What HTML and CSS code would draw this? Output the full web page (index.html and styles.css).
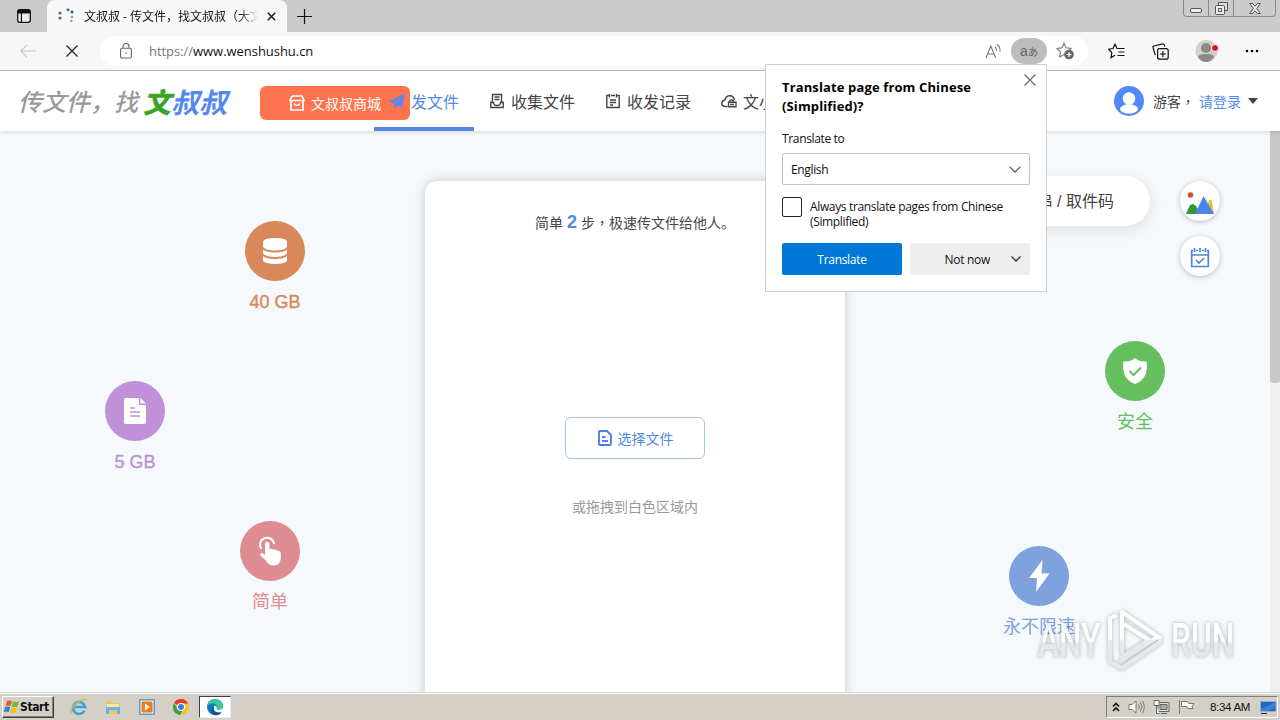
FILE: index.html
```html
<!DOCTYPE html>
<html lang="zh-CN">
<head>
    <meta charset="UTF-8">
    <meta name="viewport" content="width=device-width, initial-scale=1.0">
    <title>文叔叔 - 传文件，找文叔叔</title>
    <link rel="stylesheet" href="styles.css">
</head>
<body>
    <div class="screen">
        <!-- Browser tabs -->
        <div class="tabbar">
            <svg class="tab-actions" width="16" height="16" viewBox="0 0 16 16"><rect x="1.7" y="1.7" width="12.6" height="12.6" rx="2" fill="#eee" stroke="#111" stroke-width="1.3"/><path d="M2 2h12v3.4H6V14H4.800V5.400H2z" fill="#111"/></svg>
            <div class="tab">
                <svg class="favicon" width="16" height="16" viewBox="0 0 16 16" fill="#2879b9"><circle cx="2" cy="5" r="1.6"/><circle cx="2" cy="10" r="1.6"/><circle cx="10" cy="1.8" r="1.5"/><circle cx="14" cy="4" r="1.5" fill="#175d91"/><circle cx="14" cy="9" r="1.3" fill="#70a8d0"/><circle cx="13.3" cy="13" r="1.2" fill="#70a8d0"/></svg>
                <span class="tab-title">文叔叔 - 传文件，找文叔叔（大文</span>
                <svg width="9" height="9" viewBox="0 0 9 9"><path d="M.8.8l7.4 7.4M8.2.8L.8 8.2" stroke="#111" stroke-width="1.4"/></svg>
            </div>
            <svg class="new-tab" width="15" height="15" viewBox="0 0 15 15"><path d="M7.5 0v15M0 7.5h15" stroke="#111" stroke-width="1.2"/></svg>
            <div class="window-buttons">
                <span class="min"><svg width="12" height="5" viewBox="0 0 12 5"><rect x=".5" y=".5" width="11" height="4" rx="1.5" fill="#eee" stroke="#555"/></svg></span>
                <span class="max"><svg width="13" height="13" viewBox="0 0 13 13" fill="none" stroke="#555"><path d="M3.5 3.5v-3h9v8h-3" fill="#ddd"/><rect x=".5" y="3.5" width="9" height="9" rx="1" fill="#eee"/><rect x="3.5" y="6.5" width="3" height="3"/></svg></span>
                <span class="close"><svg width="12" height="11" viewBox="0 0 12 11"><path d="M.7.5h3L6 3.3 8.3.5h3L7.7 5.5l3.6 5h-3L6 7.7l-2.3 2.8h-3l3.6-5z" fill="#eee" stroke="#555"/></svg></span>
            </div>
        </div>

        <!-- Address bar -->
        <div class="toolbar">
            <svg class="back" width="16" height="14" viewBox="0 0 16 14" fill="none" stroke="#c9c9c9" stroke-width="1.2"><path d="M16 7H1M7 .8L.9 7 7 13.200"/></svg>
            <svg class="stop" width="12" height="12" viewBox="0 0 12 12"><path d="M.5.5l11 11M11.500.5l-11 11" stroke="#222" stroke-width="1.2"/></svg>
            <div class="address">
                <svg class="lock" width="12" height="16" viewBox="0 0 12 16" fill="none" stroke="#666" stroke-width="1.1"><rect x=".6" y="5.200" width="10.800" height="9.800" rx="1.500"/><path d="M3 5V3.500a3 3 0 0 1 6 0V5"/><circle cx="6" cy="10" r=".8" fill="#666" stroke="none"/></svg>
                <span class="url"><span>https://</span>www.wenshushu.cn</span>
                <svg class="read" width="17" height="16" viewBox="0 0 17 16" fill="none" stroke="#777" stroke-width="1.1"><path d="M1 15L5.800 3l4.800 12M2.600 11H9M10 3.800q1.800 1.400 1.500 4M12 1.500q3.500 2.500 3 7"/></svg>
                <span class="translate-badge"><span>a</span>あ</span>
                <svg class="star" width="19" height="18" viewBox="0 0 19 18"><path d="M8 1.200l2.200 4.500 4.900.7-3.400 3.500.6 4.800L8 12.600l-4.400 2.300.9-5L1 6.400l4.900-.7z" fill="none" stroke="#777" stroke-width="1.100"/><circle cx="13" cy="12.500" r="4.800" fill="#666"/><path d="M13 10v5M10.500 12.500h5" stroke="#fff" stroke-width="1.200"/></svg>
            </div>
            <svg class="favorites" width="17" height="16" viewBox="0 0 17 16" fill="none" stroke="#111" stroke-width="1.2"><path d="M9.500 5.500H9L7 1.200 5 5.500l-4.400.700 3.200 3.300L3 14.500 7 12.200M9.500 5.500H16.500M10.500 9H16.500M9.500 12.500h7"/></svg>
            <svg class="collections" width="17" height="17" viewBox="0 0 17 17" fill="none" stroke="#111" stroke-width="1.2"><rect x="5.600" y="5.600" width="10.600" height="10.600" rx="2"/><path d="M10.900 8v6M8 11h6M13 3.500L12 1.500Q11.500.6 10.500.9L2 3Q.6 3.400 1 4.600L3.300 12"/></svg>
            <svg class="profile" width="24" height="24" viewBox="0 0 24 24"><circle cx="11.500" cy="12" r="11" fill="#d2d0ce"/><circle cx="11" cy="9" r="5" fill="#8c8a88"/><path d="M3 18q0-3 8-3t8 3q-3 5-8 5t-8-5z" fill="#8c8a88"/><circle cx="20" cy="9" r="3.500" fill="#e0101b" stroke="#f7f7f7"/></svg>
            <svg class="more" width="14" height="4" viewBox="0 0 14 4"><circle cx="2" cy="2" r="1.300"/><circle cx="7" cy="2" r="1.300"/><circle cx="12" cy="2" r="1.300"/></svg>
        </div>

        <!-- Site header -->
        <header class="site-header">
            <div class="logo"><span class="slogan">传文件，找</span><span class="brand"><b>文</b>叔叔</span></div>
            <a class="shop">
                <svg width="16" height="16" viewBox="0 0 16 16" fill="none" stroke="#fff" stroke-width="1.700"><path d="M2 6.500V15h12V6.500M3 1h10l2 4.500q-1 1.500-2.500 0M3 1L1 5.500q1 1.500 2.800 0h8.400M5 8.500q3 4 6 0"/></svg>
                <span>文叔叔商城</span>
            </a>
            <nav class="nav">
                <a class="nav-item active"><svg width="16" height="16" viewBox="0 0 16 16"><path d="M16 0L0 8.500l4.500 2zM16 0L5.500 11v4.500l2.800-3 4.700 2z" fill="#5488f0"/></svg>发文件</a>
                <a class="nav-item"><svg width="14" height="16" viewBox="0 0 14 16" fill="none" stroke="#444" stroke-width="1.400"><path d="M2.500 9V1.500h9V9M4.500 4h5M4.500 6.500h5M.8 8.500V14.500h12.400V8.500M.8 9.500H3.500q0 3 3.500 3t3.500-3h2.700"/></svg>收集文件</a>
                <a class="nav-item"><svg width="14" height="16" viewBox="0 0 14 16" fill="none" stroke="#444" stroke-width="1.400"><path d="M3 2.500H.8v12h12.400v-12H11M5 2.500h4M3.500 1v3.500M10.500 1v3.500M4 7h6M4 9.500h6M4 12h3"/></svg>收发记录</a>
                <a class="nav-item"><svg width="16" height="16" viewBox="0 0 16 16" fill="none" stroke="#444" stroke-width="1.400"><path d="M6.500 13.500H3.800Q.7 13 .8 10.200T4 7q.5-4 4.500-4.300T13.500 7M8.500 9v-1q2-2.500 4 0v1M7.500 9.200h7.500v4.500H7.500zM9 11.500h4"/></svg>文小二</a>
            </nav>
            <div class="account">
                <svg width="30" height="30" viewBox="0 0 30 30"><circle cx="15" cy="15" r="15" fill="#5488f5"/><circle cx="15" cy="12.500" r="6.300" fill="#fff"/><ellipse cx="15" cy="23" rx="9" ry="4.700" fill="#fff"/></svg>
                <span class="guest">游客<i class="comma" lang="zh-TW">，</i></span>
                <a class="login">请登录</a>
                <i class="caret"></i>
            </div>
        </header>

        <!-- Upload area with the floating features -->
        <main class="canvas">
            <section class="upload">
                <p class="steps">简单 <b>2</b> 步<i class="comma" lang="zh-TW">，</i>极速传文件给他人。</p>
                <button class="choose"><svg width="16" height="16" viewBox="0 0 16 16" fill="none" stroke="#4f82e6" stroke-width="1.900"><path d="M3 1h7l4 4v9q0 1-1 1H3q-1 0-1-1V2q0-1 1-1zM5 7h3.500M5 11h6"/></svg>选择文件</button>
                <p class="drop-hint">或拖拽到白色区域内</p>
            </section>

            <div class="feature storage">
                <span class="disc"><svg width="26" height="28" viewBox="0 0 26 28" fill="#fff"><path d="M1 5q0-4 12-4t12 4v5q-3 3.500-12 3.500T1 10z"/><path d="M1 12.500q3 3 12 3t12-3v4q-3 3.500-12 3.500T1 16.500z"/><path d="M1 19q3 3 12 3t12-3v5q-3 3-12 3T1 24z"/></svg></span>
                <span>40 GB</span>
            </div>
            <div class="feature size">
                <span class="disc"><svg width="24" height="28" viewBox="0 0 24 28"><path d="M3 1h13v7h7v17q0 2-2 2H3q-2 0-2-2V3q0-2 2-2z" fill="#fff"/><path d="M17.500 1l5.500 5.500h-5.500z" fill="#fff"/><path d="M7 15h10M7 19h10M7 11h5" stroke="#c091d9" stroke-width="1.600"/></svg></span>
                <span>5 GB</span>
            </div>
            <div class="feature easy">
                <span class="disc"><svg width="26" height="32" viewBox="0 0 26 32"><path d="M4.500 14A7 7 0 1 1 17 9" fill="none" stroke="#fff" stroke-width="2"/><path d="M8 9q0-2.300 2.200-2.300T12.500 9v5q2-1 4 .8 2-1 3.800 1 3.500-.8 3.500 3V24q-1 6.500-7 6.500-5 0-7.500-4.500L3 20q0-2 2-2l3 2z" fill="#fff"/></svg></span>
                <span>简单</span>
            </div>
            <div class="feature safe">
                <span class="disc"><svg width="26" height="28" viewBox="0 0 26 28"><path d="M13 1q4 4 11.500 3.500Q27 22 13 27-1 22 1.500 4.500 9 5 13 1z" fill="#fff"/><path d="M7.500 14l4 4 7.500-7.500" fill="none" stroke="#66bf5e" stroke-width="2"/></svg></span>
                <span>安全</span>
            </div>
            <div class="feature speed">
                <span class="disc"><svg width="22" height="32" viewBox="0 0 22 32"><path d="M14.500 0L1 18h8L8 32l13.500-18.500h-8z" fill="#fff"/></svg></span>
                <span>永不限速</span>
            </div>

            <div class="pickup">口令串 / 取件码</div>
            <div class="side-tools">
                <a><svg width="28" height="24" viewBox="0 0 28 24"><circle cx="4.500" cy="4" r="2.800" fill="#cf5138"/><path d="M19 23l4-14 2.500-.5L28 23z" fill="#d8c33c"/><path d="M0 23L4 14l3-1 3 2 5 8z" fill="#2f9a35"/><path d="M9 23L17.500 5l10.500 18z" fill="#4d83ee"/></svg></a>
                <a><svg width="20" height="20" viewBox="0 0 20 20" fill="none" stroke="#5084d8" stroke-width="1.700"><path d="M3 2.500H1.700v16h16.600v-16H17M6 2.500h2M12 2.500h2M4.500 0v4M10 0v4M15.500 0v4M2 7h16M6 12l3 3 5-5"/></svg></a>
            </div>
            <div class="scrollbar"><i></i></div>
        </main>

        <!-- Taskbar -->
        <footer class="taskbar">
            <div class="start">
                <svg width="17" height="16" viewBox="0 0 17 16"><path d="M4 2q2-1 5 0L7.500 7Q5 6 2.500 7z" fill="#eb5a22"/><path d="M10 2.300q3 1.200 6 0L14.300 7.500q-2.500 1-5.500 0z" fill="#78b829"/><path d="M2.200 8q2.500-1 5 0l-1.500 5q-2.500-1-5 0z" fill="#2686d0"/><path d="M8.500 8.500q3 1 5.500 0l-1.500 5q-3 1-5.500 0z" fill="#f7bd1a"/></svg>
                Start
            </div>
            <div class="tasks">
                <span><svg width="18" height="18" viewBox="0 0 18 18" fill="none"><path d="M14.500 12.500A6 6 0 1 1 15 9H4" stroke="#36a7dc" stroke-width="2.600"/><path d="M1.500 15.500Q-1 11 7 5t10-2.500" stroke="#e7b931" stroke-width="1.500"/></svg></span>
                <span><svg width="18" height="18" viewBox="0 0 18 18"><path d="M2 3h6l1 2h7v11H2z" fill="#e9c765"/><path d="M3 6h12v4H3z" fill="#f8e9a8"/><path d="M2 9h14v7h-3v-4H5v4H2z" fill="#67b4dc"/></svg></span>
                <span><svg width="18" height="18" viewBox="0 0 18 18"><path d="M1 1h16v16H1z" fill="#5ca0d2"/><path d="M2.500 2.500h13v13h-13z" fill="#e9f2fa"/><rect x="3.500" y="3.500" width="11" height="11" rx="1.500" fill="#f07c12"/><path d="M7 5.500l5 3.500-5 3.500z" fill="#fff"/></svg></span>
                <span><svg width="18" height="18" viewBox="0 0 18 18"><circle cx="9" cy="9" r="8" fill="#f3c629"/><path d="M9 9L2 5a8 8 0 0 1 14.200.5H9z" fill="#e33b2e"/><path d="M2 5a8 8 0 0 0 6 12l3.500-6L5.500 11z" fill="#35a352"/><circle cx="9" cy="9" r="4" fill="#fff"/><circle cx="9" cy="9" r="3" fill="#3c7de6"/></svg></span>
                <span class="running"><svg width="18" height="18" viewBox="0 0 18 18"><circle cx="9" cy="9" r="8" fill="#147bbf"/><path d="M1.500 8Q3 1 9.500 1 17 1.500 17 8q-.5 4-4.500 4-3 0-1.700-2.500Q11 5.500 7 5.500 3 5.500 1.500 8z" fill="#3fc49c"/><path d="M7 9q-1 6 6 6 2 0 3-1-3 4-8 3Q3 14 7 9z" fill="#0b4d93"/><path d="M8 8q2-1 2.700 1.500Q10 12 12.500 12q3 0 4.300-2L17 12l-2 2q-6 1-7-3z" fill="#fff"/></svg></span>
            </div>
            <div class="tray">
                <svg width="8" height="10" viewBox="0 0 8 10" fill="none" stroke="#111" stroke-width="1.600"><path d="M1 4.500l3-3 3 3M1 9l3-3 3 3"/></svg>
                <svg width="17" height="16" viewBox="0 0 17 16" fill="none" stroke="#777"><path d="M1 5.500h3L8 2v12l-4-3.500H1z" fill="#fff"/><path d="M10.500 5.500q1.500 2.500 0 5M12.500 3.500q3 4.500 0 9M14.500 2q3.500 6 0 12"/></svg>
                <svg width="17" height="16" viewBox="0 0 17 16" stroke="#666"><path d="M5 3.500h11v9H5z" fill="#ddd"/><path d="M7 5.500h7v5H7z" fill="#aaa"/><path d="M8 14.500h6M1 1.500h5v5H1zM3.500 6.500v8h3" fill="#fff"/></svg>
                <svg width="17" height="16" viewBox="0 0 17 16" stroke="#777"><path d="M1.500 1v14M3.500 2.500h6l1 2H16l-2 3 1 2h-5l-1-2H3.500z" fill="#fff"/></svg>
                <time>8:34 AM</time>
                <svg width="17" height="13" viewBox="0 0 17 13"><path d="M.5.500h15.500v10H.500z" fill="#2766bd" stroke="#8eaed1"/><path d="M1 8L15.500 1v5L8 10H1z" fill="#3b85d7"/><path d="M1 12.500h6" stroke="#222"/></svg>
            </div>
        </footer>

        <!-- Translate popup -->
        <div class="popup">
            <svg class="popup-close" width="12" height="12" viewBox="0 0 12 12"><path d="M.5.5l11 11M11.500.5l-11 11" stroke="#666" stroke-width="1.100"/></svg>
            <h2>Translate page from Chinese (Simplified)?</h2>
            <label class="to">Translate to</label>
            <div class="select"><span>English</span><svg width="12" height="7" viewBox="0 0 12 7"><path d="M.5.7L6 6.200 11.500.7" fill="none" stroke="#555" stroke-width="1.200"/></svg></div>
            <label class="always"><i class="box"></i><span>Always translate pages from Chinese (Simplified)</span></label>
            <div class="popup-actions">
                <button class="primary">Translate</button>
                <button class="secondary"><span>Not now</span><svg width="10" height="6" viewBox="0 0 10 6"><path d="M.5.5L5 5 9.500.5" fill="none" stroke="#333" stroke-width="1.300"/></svg></button>
            </div>
        </div>

        <!-- Recording watermark -->
        <div class="watermark">
            <span>ANY</span>
            <svg width="62" height="64" viewBox="0 0 62 64" fill="none" stroke="url(#fade)" stroke-width="4" stroke-linejoin="round" stroke-linecap="round">
                <defs><linearGradient id="fade" gradientUnits="userSpaceOnUse" x1="0" y1="0" x2="0" y2="64"><stop offset=".48" stop-color="#fff"/><stop offset=".52" stop-color="#e4e6e8"/></linearGradient></defs>
                <path d="M17 44V4l38 26M17 15l27 17-27 17M10 8L5 10v44l12 6 38-26M17 52l34-22"/>
            </svg>
            <span>RUN</span>
        </div>
    </div>
</body>
</html>
```
FILE: styles.css
```css
* {
    box-sizing: border-box;
}
body {
    margin: 0;
    font-family: "Liberation Sans", "Noto Sans CJK SC", sans-serif;
    color: #444;
}
p, h2 {
    margin: 0;
}
svg {
    display: block;
    flex: none;
}
button {
    border: none;
    padding: 0;
    font-family: inherit;
}
.screen {
    position: relative;
    width: 1280px;
    height: 720px;
    overflow: hidden;
    display: flex;
    flex-direction: column;
    white-space: nowrap;
}
.comma {
    font-family: "Noto Sans CJK TC", sans-serif;
    font-style: normal;
    line-height: 1;
}

/* browser chrome */
.tabbar {
    height: 32px;
    flex: none;
    display: flex;
    align-items: center;
    background: #cbcbcb;
    font-family: "Open Sans", "Noto Sans CJK SC", sans-serif;
}
.tab-actions {
    margin: 0 15px 0 16px;
}
.tab {
    width: 240px;
    height: 32px;
    padding: 0 11px;
    display: flex;
    align-items: center;
    background: #f7f7f7;
    border-radius: 8px 8px 0 0;
}
.favicon {
    margin-right: 10px;
}
.tab-title {
    width: 174px;
    margin-right: 9px;
    overflow: hidden;
    font-size: 12px;
    color: #111;
    -webkit-mask-image: linear-gradient(to right, #000 155px, transparent);
    mask-image: linear-gradient(to right, #000 155px, transparent);
}
.new-tab {
    margin-left: 10px;
}
.window-buttons {
    display: flex;
    align-self: flex-start;
    height: 17px;
    margin: 0 4px 0 auto;
    border: 1px solid #888;
    border-top: none;
    border-radius: 0 0 4px 4px;
}
.window-buttons span {
    display: flex;
    justify-content: center;
    align-items: center;
    width: 25px;
    border-right: 1px solid #888;
}
.window-buttons .min {
    padding-top: 5px;
}
.window-buttons .close {
    width: 41px;
    border-right: none;
}
.toolbar {
    height: 39px;
    flex: none;
    display: flex;
    align-items: center;
    padding-left: 20px;
    background: #f7f7f7;
    border-bottom: 1px solid #bdbdbd;
}
.stop {
    margin: 0 28px 0 30px;
}
.address {
    width: 988px;
    height: 30px;
    margin: 0 20px 0 -6px;
    padding: 0 13px 0 20px;
    display: flex;
    align-items: center;
    background: #fff;
    border-radius: 15px;
}
.url {
    margin: 0 auto 0 17px;
    font-family: "Open Sans", sans-serif;
    font-size: 13px;
    letter-spacing: -0.04px;
    color: #111;
}
.url span {
    color: #777;
}
.translate-badge {
    display: flex;
    justify-content: center;
    align-items: center;
    width: 36px;
    height: 26px;
    margin: 0 9px 0 9px;
    border-radius: 13px;
    background: #bdbdbd;
    color: #666;
    font-size: 10px;
}
.read {
    margin-left: 2px;
}
.translate-badge span {
    font-size: 14px;
}
.collections {
    margin: 0 26px 0 27px;
}
.more {
    margin-left: 26px;
}

/* site header */
.site-header {
    position: relative;
    z-index: 1;
    height: 60px;
    flex: none;
    display: flex;
    align-items: center;
    padding: 0 22px 0 18px;
    background: #fff;
    box-shadow: 0 1px 4px rgba(0, 0, 0, 0.15);
}
.logo {
    display: flex;
    align-items: center;
    width: 242px;
    font-weight: bold;
    font-style: italic;
    font-family: "Noto Sans CJK SC", sans-serif;
}
.slogan {
    width: 125px;
    font-size: 24px;
    line-height: 60px;
    font-weight: 500;
    color: #999;
}
.brand {
    font-size: 28px;
    line-height: 60px;
    color: #5488f0;
}
.brand b {
    color: #37a526;
}
.shop {
    display: flex;
    align-items: center;
    gap: 6px;
    width: 150px;
    height: 34px;
    padding-left: 29px;
    margin-top: 4px;
    border-radius: 6px;
    background: #ff744e;
    color: #fff;
    font-size: 14px;
}
.nav {
    display: flex;
    margin-left: -36px;
    font-size: 16px;
}
.nav-item {
    display: flex;
    align-items: center;
    gap: 6px;
    height: 60px;
    padding: 0 15px;
}
.nav-item svg[width="14"] {
    margin: 0 1px;
}
.nav-item.active {
    color: #5488e6;
    border-bottom: 4px solid #5488e6;
    padding-top: 4px;
}
.account {
    display: flex;
    align-items: center;
    margin-left: auto;
    font-size: 14px;
}
.guest {
    width: 46px;
    margin-left: 9px;
}
.login {
    color: #5488e6;
}
.caret {
    margin: 0 0 0 7px;
    border: 5px solid transparent;
    border-top: 6px solid #444;
    border-bottom: none;
}

/* upload area */
.canvas {
    position: relative;
    height: 561px;
    flex: none;
    overflow: hidden;
    padding: 50px 10px 0 0;
    background: #f5f9fc;
}
.upload {
    display: flex;
    flex-direction: column;
    align-items: center;
    width: 420px;
    height: 560px;
    margin: 0 auto;
    padding-top: 27px;
    background: #fff;
    border-radius: 12px;
    box-shadow: 0 0 12px rgba(0, 0, 0, 0.2);
}
.steps {
    height: 28px;
    line-height: 28px;
    font-size: 14px;
}
.steps b {
    color: #5488e6;
    font-size: 18px;
}
.choose {
    display: flex;
    align-items: center;
    justify-content: center;
    gap: 5px;
    width: 140px;
    height: 42px;
    margin: 181px 0 37px;
    padding-bottom: 1px;
    border: 1px solid #a5c0f3;
    border-radius: 6px;
    background: #fff;
    color: #5488e6;
    font-size: 14px;
}
.drop-hint {
    line-height: 22px;
    font-size: 14px;
    color: #999;
}
.feature {
    position: absolute;
    display: flex;
    flex-direction: column;
    align-items: center;
    width: 80px;
    font-size: 18px;
    line-height: 22px;
}
.disc {
    display: flex;
    align-items: center;
    justify-content: center;
    width: 60px;
    height: 60px;
    margin-bottom: 10px;
    border-radius: 50%;
    background: currentColor;
}
.storage, .size {
    -webkit-text-stroke: 0.4px;
}
.storage {
    left: 235px;
    top: 90px;
    color: #d98859;
}
.size {
    left: 95px;
    top: 250px;
    color: #c091d9;
}
.easy {
    left: 230px;
    top: 390px;
    color: #de8c92;
}
.safe {
    left: 1095px;
    top: 210px;
    color: #66bf5e;
}
.speed {
    left: 999px;
    top: 415px;
    color: #7da2dd;
}
.pickup {
    position: absolute;
    left: 870px;
    top: 45px;
    width: 280px;
    height: 50px;
    padding-right: 36px;
    border-radius: 25px;
    background: #fff;
    box-shadow: 0 4px 16px rgba(0, 0, 0, 0.1);
    font-size: 16px;
    line-height: 51px;
    text-align: right;
}
.side-tools {
    position: absolute;
    left: 1180px;
    top: 50px;
    display: flex;
    flex-direction: column;
    gap: 15px;
}
.side-tools a {
    display: flex;
    align-items: center;
    justify-content: center;
    width: 40px;
    height: 40px;
    padding-top: 3px;
    border-radius: 50%;
    background: #fff;
    box-shadow: 0 1px 5px rgba(0, 0, 0, 0.25);
}
.scrollbar {
    position: absolute;
    right: 0;
    top: 0;
    width: 10px;
    height: 100%;
    background: #f0f0f0;
}
.scrollbar i {
    display: block;
    height: 252px;
    border-radius: 0 0 3px 3px;
    background: #c8c8c8;
}

/* taskbar */
.taskbar {
    height: 28px;
    flex: none;
    display: flex;
    align-items: center;
    padding: 2px 2px 0;
    background: #d4d0c8;
    box-shadow: inset 0 1px #d4d0c8, inset 0 2px #fff;
    color: #111;
}
.start {
    display: flex;
    align-items: center;
    width: 52px;
    height: 22px;
    border: 1px solid;
    border-color: #fff #404040 #404040 #fff;
    box-shadow: inset -1px -1px #808080;
    font-family: "DejaVu Sans Condensed", "DejaVu Sans", sans-serif;
    font-size: 12px;
    font-weight: bold;
    letter-spacing: -0.4px;
}
.tasks {
    display: flex;
    margin-left: 8px;
}
.tasks span {
    display: flex;
    align-items: center;
    justify-content: center;
    width: 34px;
    height: 22px;
}
.tasks .running {
    width: 32px;
    margin-left: 1px;
    background: #fff;
    border: 1px solid;
    border-color: #404040 #eee #eee #404040;
}
.tray {
    display: flex;
    align-items: center;
    width: 172px;
    height: 22px;
    margin-left: auto;
    padding-left: 5px;
    gap: 8px;
    border: 1px solid;
    border-color: #808080 #fff #fff #808080;
}
.tray time {
    width: 42px;
    margin: 0 1px 0 7px;
    font-size: 11.5px;
    letter-spacing: -0.3px;
}

/* translate popup */
.popup {
    position: absolute;
    z-index: 2;
    left: 765px;
    top: 64px;
    width: 282px;
    height: 228px;
    padding: 13px 16px 0;
    border: 1px solid #cfcfcf;
    background: #fff;
    white-space: normal;
    font-family: "Open Sans", sans-serif;
    font-size: 12px;
    letter-spacing: -0.35px;
    color: #111;
}
.popup-close {
    position: absolute;
    right: 10px;
    top: 9px;
}
.popup h2 {
    width: 220px;
    font-size: 13px;
    line-height: 19px;
    letter-spacing: 0.13px;
    color: #000;
}
.to {
    display: block;
    margin-top: 14px;
    line-height: 18px;
}
.select {
    display: flex;
    align-items: center;
    justify-content: space-between;
    height: 32px;
    margin: 5px 0 12px;
    padding: 0 8px;
    border: 1px solid #c4c4c4;
    border-radius: 2px;
}
.always {
    display: flex;
    gap: 8px;
    line-height: 15px;
}
.always span {
    padding-top: 2px;
}
.box {
    flex: none;
    width: 20px;
    height: 20px;
    border: 1px solid #222;
    border-radius: 2px;
}
.popup-actions {
    display: flex;
    gap: 8px;
    margin-top: 14px;
}
.popup-actions button {
    width: 120px;
    height: 32px;
    border-radius: 2px;
    font-size: 12px;
    letter-spacing: -0.3px;
}
.primary {
    background: #0078d7;
    color: #fff;
}
.secondary {
    display: flex;
    align-items: center;
    justify-content: flex-end;
    gap: 21px;
    padding-right: 9px;
    background: #eee;
    color: #111;
}

/* the letters are squeezed, so each box is wider than the room it takes */
.watermark {
    position: absolute;
    z-index: 1;
    left: 1038px;
    top: 608px;
    display: flex;
    align-items: center;
    gap: 4px;
    font-family: "Roboto", sans-serif;
    font-size: 48px;
    font-weight: 500;
    opacity: 0.85;
    filter: drop-shadow(0 0 2px rgba(0, 0, 0, 0.35));
}
.watermark span {
    width: 103px;
    margin-right: -40px;
    transform: scaleX(0.66);
    transform-origin: left;
    background: linear-gradient(#fff 52%, #e4e6e8 54%);
    background-clip: text;
    -webkit-background-clip: text;
    color: transparent;
}
```
